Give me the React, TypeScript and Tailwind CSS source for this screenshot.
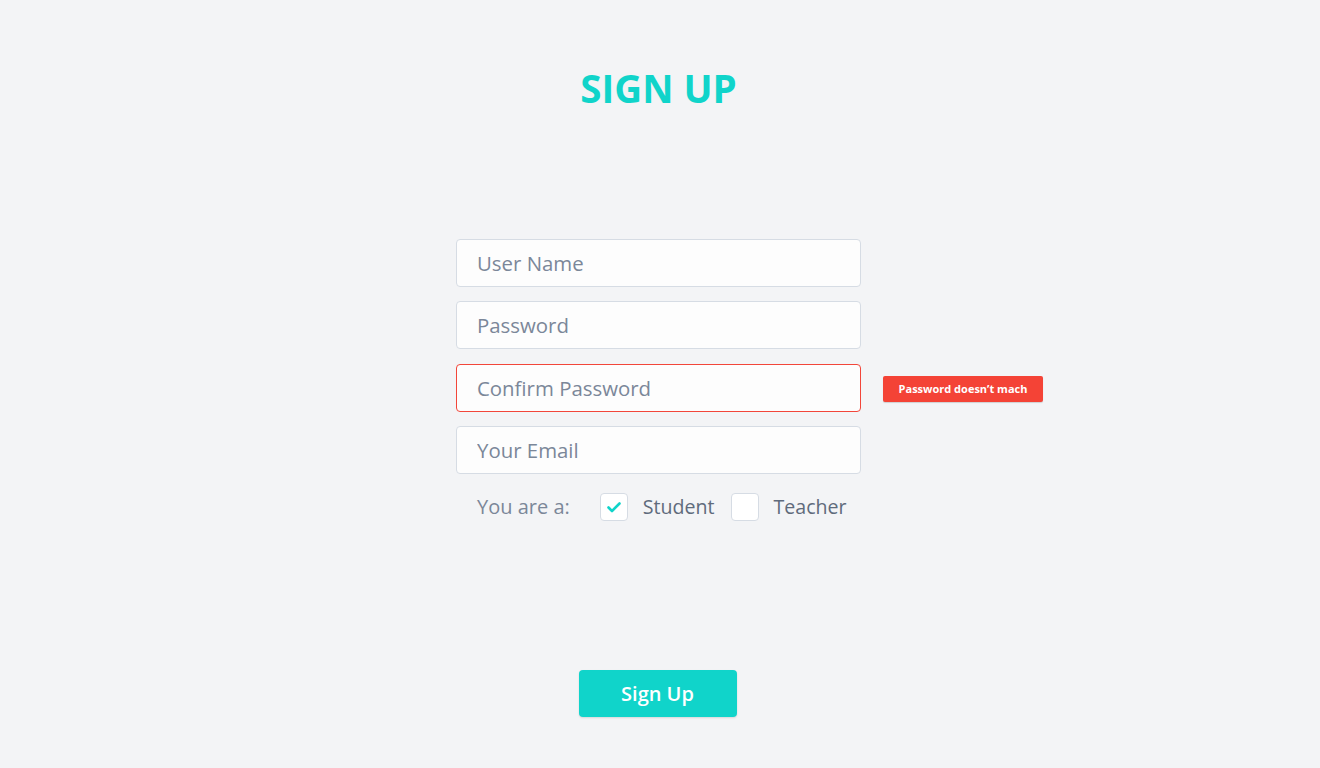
const inputs = ["User Name", "Password", "Confirm Password", "Your Email"];

function Field({ placeholder, error }: { placeholder: string; error?: boolean }) {
  return (
    <div className={`relative ${error ? "mt-[1px]" : ""}`}>
      <input
        type="text"
        placeholder={placeholder}
        className={`block h-[48px] w-[405px] rounded-[4px] border bg-[#fdfdfd] px-[20px] pb-[1px] text-[20.4px] text-[#5a6678] outline-none placeholder:text-[#7b8799] ${
          error ? "border-[#f2463a]" : "border-[#d6dce4]"
        }`}
      />
      {error && (
        <div className="absolute left-[427px] top-[12px] flex h-[26px] w-[160px] items-center justify-center rounded-[2px] bg-[#f44336] text-[11px] font-bold text-white shadow-[0_1px_1px_rgba(0,0,0,0.15)]">
          Password doesn’t mach
        </div>
      )}
    </div>
  );
}

function Check({ checked }: { checked?: boolean }) {
  return (
    <span className="flex h-[28px] w-[28px] items-center justify-center rounded-[4px] border border-[#d6dce4] bg-white">
      {checked && (
        <svg width="14" height="11" viewBox="0 0 14 11" fill="none">
          <path d="M1.5 5.5L5 9L12.5 1.5" stroke="#10d4ca" strokeWidth="2.6" strokeLinecap="round" strokeLinejoin="round" />
        </svg>
      )}
    </span>
  );
}

export default function App() {
  return (
    <div className="flex min-h-[768px] flex-col items-center bg-[#f3f4f6] pr-[3px] font-['Open_Sans',sans-serif]">
      <h1 className="mt-[62px] text-[38.5px] font-bold leading-[52px] text-[#10d4ca]">SIGN UP</h1>

      <div className="mt-[125px] flex flex-col gap-[14px]">
        {inputs.map((p) => (
          <Field key={p} placeholder={p} error={p === "Confirm Password"} />
        ))}
        <div className="mt-[4px] flex items-center pl-[21px] text-[20px] text-[#7b8799]">
          <span>You are a:</span>
          <span className="ml-[30px]"><Check checked /></span>
          <span className="ml-[15px] text-[19.6px] text-[#5f6b7c]">Student</span>
          <span className="ml-[16px]"><Check /></span>
          <span className="ml-[15px] text-[19.6px] text-[#5f6b7c]">Teacher</span>
        </div>
      </div>

      <button className="mt-[148px] mr-[2px] h-[47px] w-[158px] rounded-[4px] bg-[#10d4ca] text-[20px] font-semibold text-white shadow-[0_1px_2px_rgba(0,0,0,0.12)]">
        Sign Up
      </button>
    </div>
  );
}
